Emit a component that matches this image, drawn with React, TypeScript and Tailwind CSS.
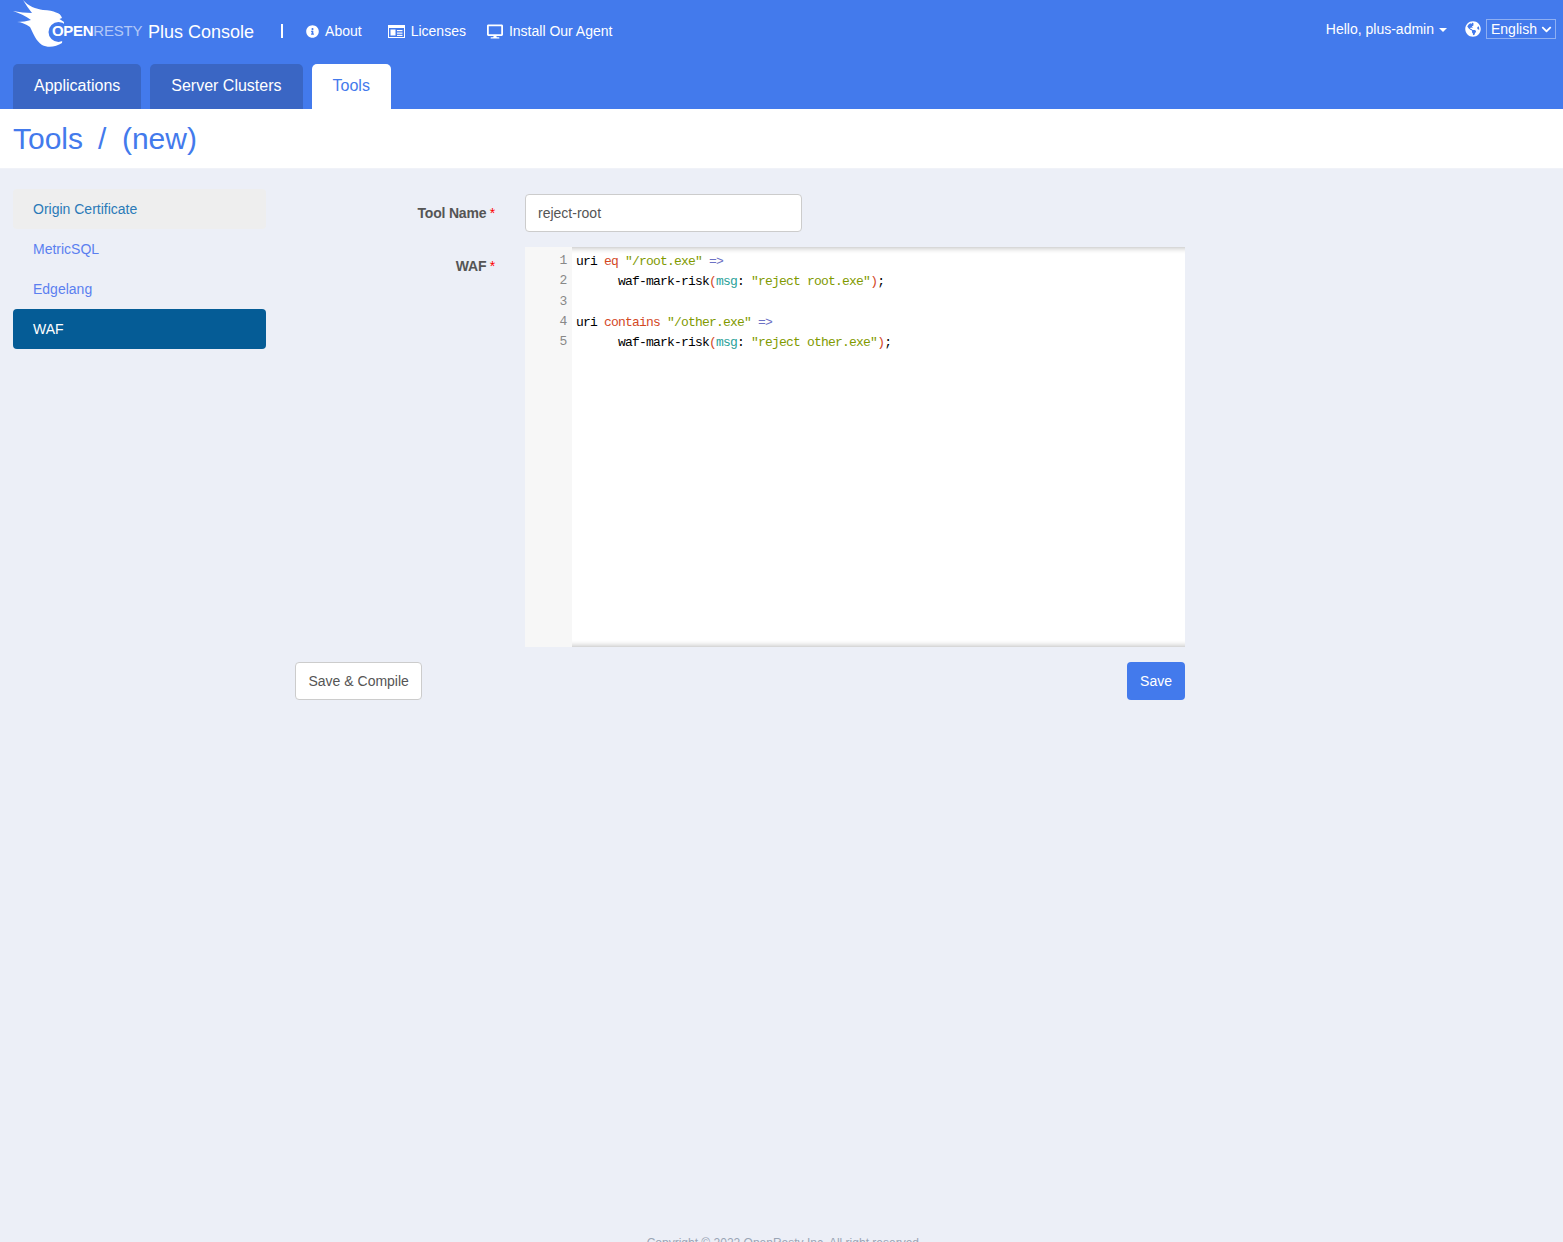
import { FaInfoCircle, FaDesktop, FaGlobeAmericas, FaChevronDown } from "react-icons/fa";

const tabs = ["Applications", "Server Clusters"];

const codeLines = [
  <><span>uri </span><span className="text-[#d3481f]">eq</span> <span className="text-[#7f9a00]">"/root.exe"</span> <span className="text-[#6c71c4]">=&gt;</span></>,
  <>      <span>waf-mark-risk</span><span className="text-[#d3481f]">(</span><span className="text-[#2aa198]">msg</span>: <span className="text-[#7f9a00]">"reject root.exe"</span><span className="text-[#d3481f]">)</span>;</>,
  <> </>,
  <><span>uri </span><span className="text-[#d3481f]">contains</span> <span className="text-[#7f9a00]">"/other.exe"</span> <span className="text-[#6c71c4]">=&gt;</span></>,
  <>      <span>waf-mark-risk</span><span className="text-[#d3481f]">(</span><span className="text-[#2aa198]">msg</span>: <span className="text-[#7f9a00]">"reject other.exe"</span><span className="text-[#d3481f]">)</span>;</>,
];

function Logo() {
  return (
    <div className="relative ml-[-13px] w-[148px] h-[50px] shrink-0">
      <svg viewBox="0 0 74 50" className="absolute left-0 top-0 w-[74px] h-[50px]">
        <path
          fill="#fff"
          d="M23 0 C28 6 36 9 43 10 C49 10 53 11 56 12.500 C59 13 61 15 62 18 L59.500 19 L64 22 L62 43 C56 47 48 48 42 45 C36 41 33 33 30 27 C26 24 21 22 17 22 C22 22 27 21 31 20 C26 16 19 13 13 11 C19 12 26 13 32 13 C29 9 26 5 23 0 Z"
        />
        <circle cx="58.500" cy="32" r="10" fill="#437aec" />
        <rect x="65" y="18" width="9" height="30" fill="#437aec" />
      </svg>
      <span className="absolute left-[52px] top-[22px] font-bold text-[15px] leading-[18px] tracking-[-0.3px] text-white">
        OPEN<span className="font-normal text-white/60 tracking-[-0.2px]">RESTY</span>
      </span>
    </div>
  );
}

function LicenseIcon() {
  return (
    <svg viewBox="0 0 17 13" className="w-[17px] h-[13px]" fill="#fff">
      <path fillRule="evenodd" d="M0 0 H17 V13 H0 Z M1 3 V12 H16 V3 Z" />
      <rect x="2.500" y="4.500" width="5" height="6" />
      <rect x="9" y="5" width="5.500" height="1.200" />
      <rect x="9" y="7.500" width="5.500" height="1.200" />
      <rect x="9" y="9.800" width="5.500" height="1.200" />
    </svg>
  );
}

export default function App() {
  return (
    <div className="h-[1242px] overflow-hidden bg-[#eceff7] font-['Liberation_Sans',Arial,sans-serif] text-sm text-[#444]">
      <header className="h-[109px] bg-[#437aec] text-white flex flex-col">
        <div className="h-[64px] flex items-start pl-[13px] pr-[7px]">
          <Logo />
          <span className="mt-[22px] text-lg leading-5 font-normal">Plus Console</span>
          <span className="ml-[27px] mt-[24px] w-[2px] h-[14px] bg-white" />
          <nav className="flex items-center mt-[22px] h-[18px] ml-[23px]">
            <a className="flex items-center gap-[6px]"><FaInfoCircle className="w-[13px] h-[13px]" />About</a>
            <a className="flex items-center gap-[6px] ml-[26px]"><LicenseIcon />Licenses</a>
            <a className="flex items-center gap-[6px] ml-[21px]"><FaDesktop className="w-[16px] h-[15px]" />Install Our Agent</a>
          </nav>
          <div className="ml-auto flex items-center mt-[19px] h-[20px]">
            <span>Hello, plus-admin</span>
            <span className="ml-[5px] mt-[1px] w-0 h-0 border-x-[4px] border-t-[4px] border-x-transparent border-t-white" />
            <FaGlobeAmericas className="w-[16px] h-[16px] ml-[18px]" />
            <div className="ml-[5px] w-[70px] h-[20px] border border-white/40 flex items-center justify-between pl-[4px] pr-[3px]">
              English
              <FaChevronDown className="w-[11px] h-[11px]" />
            </div>
          </div>
        </div>
        <div className="h-[45px] flex gap-[9px] pl-[13px] text-base">
          {tabs.map((t) => (
            <div key={t} className="px-[21px] pb-[2px] flex items-center bg-[#3a66c4] rounded-t-[5px]">{t}</div>
          ))}
          <div className="px-[21px] pb-[2px] flex items-center bg-white text-[#437aec] rounded-t-[5px]">Tools</div>
        </div>
      </header>

      <div className="h-[60px] bg-white pl-[13px] flex items-center text-[30px] text-[#437aec] leading-none border-b border-[#f0f2f8]">
        <span>Tools</span>
        <span className="ml-[15px]">/</span>
        <span className="ml-[15.5px]">(new)</span>
      </div>

      <div className="h-[1067px] flex pl-[13px] pt-[20px]">
        <aside className="w-[253px] shrink-0">
          <div className="h-[40px] flex items-center px-5 bg-[#eeeeee] text-[#2a7ab8] rounded-[4px]">Origin Certificate</div>
          <div className="h-[40px] flex items-center px-5 text-[#5b7ff0]">MetricSQL</div>
          <div className="h-[40px] flex items-center px-5 text-[#5b7ff0]">Edgelang</div>
          <div className="h-[40px] flex items-center px-5 bg-[#055c96] text-white rounded-[4px]">WAF</div>
        </aside>

        <main className="ml-[29px] w-[890px] pt-[5px]">
          <div className="flex">
            <label className="w-[200px] text-right font-bold text-[#555] tracking-[-0.2px] pt-[11px] leading-[16px]">
              Tool Name<span className="ml-[3.5px] text-[#f00] font-normal">*</span>
            </label>
            <input
              readOnly
              value="reject-root"
              className="ml-[30px] w-[277px] h-[38px] bg-white border border-[#ccc] rounded-[4px] px-[12px] text-[#555] outline-none"
            />
          </div>

          <div className="flex mt-[15px]">
            <label className="w-[200px] text-right font-bold text-[#555] tracking-[-0.2px] pt-[11px] leading-[16px]">
              WAF<span className="ml-[3.5px] text-[#f00] font-normal">*</span>
            </label>
            <div className="ml-[30px] w-[660px] h-[400px] flex font-['Liberation_Mono',monospace] text-[13px] tracking-[-0.8px] leading-[20.3px] text-black">
              <div className="w-[47px] shrink-0 bg-[#f7f7f7] pt-[4px] pr-[5.500px] text-right text-[#888]">
                {codeLines.map((_, i) => (
                  <div key={i} className="h-[20.3px]">{i + 1}</div>
                ))}
              </div>
              <div className="flex-1 bg-white pt-[4px] pl-[4px] border-y border-[#d8d8d8] shadow-[inset_0_6px_5px_-5px_rgba(0,0,0,0.2),inset_0_-6px_5px_-5px_rgba(0,0,0,0.2)]">
                {codeLines.map((line, i) => (
                  <div key={i} className="h-[20.3px] whitespace-pre">{line}</div>
                ))}
              </div>
            </div>
          </div>

          <div className="flex justify-between mt-[15px]">
            <button className="h-[38px] px-[12.5px] bg-white border border-[#ccc] rounded-[4px] text-[#555]">Save &amp; Compile</button>
            <button className="h-[38px] px-[13px] bg-[#437aec] text-white rounded-[4px]">Save</button>
          </div>
        </main>
      </div>

      <footer className="h-[20px] pl-[6px] text-center text-xs leading-[14px] text-[#9aa5b5]">
        Copyright © 2022 OpenResty Inc. All right reserved.
      </footer>
    </div>
  );
}
